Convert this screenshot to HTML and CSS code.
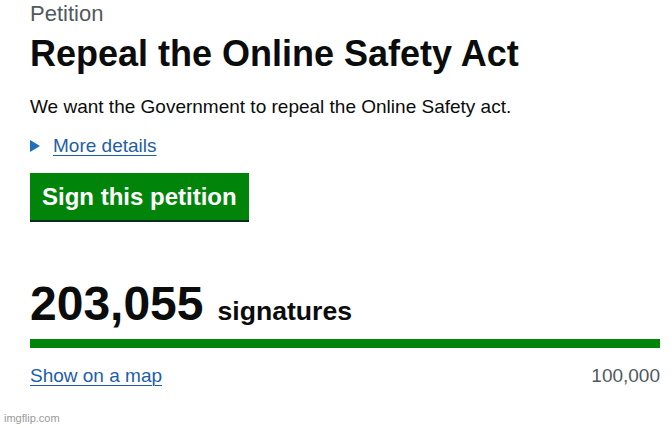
FILE: index.html
```html
<!DOCTYPE html>
<html lang="en">
<head>
    <meta charset="UTF-8">
    <title>Repeal the Online Safety Act - Petitions</title>
    <link rel="stylesheet" href="styles.css">
</head>
<body>
    <main class="page">
        <span class="caption">Petition</span>
        <h1 class="title">Repeal the Online Safety Act</h1>
        <p class="lede">We want the Government to repeal the Online Safety act.</p>
        <div class="details">
            <span class="details-arrow"></span>
            <a href="#" class="link">More details</a>
        </div>
        <a href="#" class="button">Sign this petition</a>
        <div class="count">
            <span class="count-number">203,055</span>
            <span class="count-label">signatures</span>
        </div>
        <div class="progress"><div class="progress-fill"></div></div>
        <div class="progress-foot">
            <a href="#" class="link">Show on a map</a>
            <span class="threshold">100,000</span>
        </div>
    </main>
    <footer class="watermark">imgflip.com</footer>
</body>
</html>
```

FILE: styles.css
```css
body {
    margin: 0;
    font-family: "Liberation Sans", Arial, sans-serif;
    color: #0b0c0c;
    background-color: #fff;
    width: 672px;
    height: 428px;
    overflow: hidden;
    position: relative;
}

.page {
    padding: 0 12px 0 30px;
}

.caption {
    display: block;
    font-size: 22px;
    line-height: 28px;
    color: #505a5f;
}

.title {
    margin: 6px 0 0;
    font-size: 36px;
    line-height: 40px;
    font-weight: bold;
}

.lede {
    margin: 20px 0 0;
    font-size: 19px;
    line-height: 25px;
}

.details {
    display: flex;
    align-items: center;
    margin-top: 14px;
    font-size: 19px;
    line-height: 25px;
}

.details-arrow {
    width: 0;
    height: 0;
    border-style: solid;
    border-width: 6px 0 6px 10px;
    border-color: transparent transparent transparent #1d70b8;
    margin-right: 13px;
}

.link {
    color: #1d5ea8;
    text-decoration: underline;
    text-underline-offset: 3px;
    text-decoration-thickness: 1px;
}

.button {
    display: inline-block;
    margin-top: 15px;
    padding: 10px 12px 9px;
    font-size: 24px;
    line-height: 28px;
    font-weight: bold;
    color: #fff;
    background-color: #00850a;
    text-decoration: none;
    box-shadow: 0 2px 0 #002d18;
}

.count {
    margin-top: 58px;
    display: flex;
    align-items: baseline;
    gap: 14px;
}

.count-number {
    font-size: 48px;
    line-height: 52px;
    font-weight: bold;
}

.count-label {
    font-size: 26.6px;
    font-weight: bold;
}

.progress {
    margin-top: 9px;
    height: 9px;
}

.progress-fill {
    height: 100%;
    width: 100%;
    background-color: #00850a;
}

.progress-foot {
    display: flex;
    justify-content: space-between;
    margin-top: 15px;
    font-size: 19px;
    line-height: 25px;
}

.threshold {
    color: #505a5f;
}

.watermark {
    position: absolute;
    left: 4px;
    bottom: 4px;
    font-size: 11px;
    color: #9a9a9a;
}
```
